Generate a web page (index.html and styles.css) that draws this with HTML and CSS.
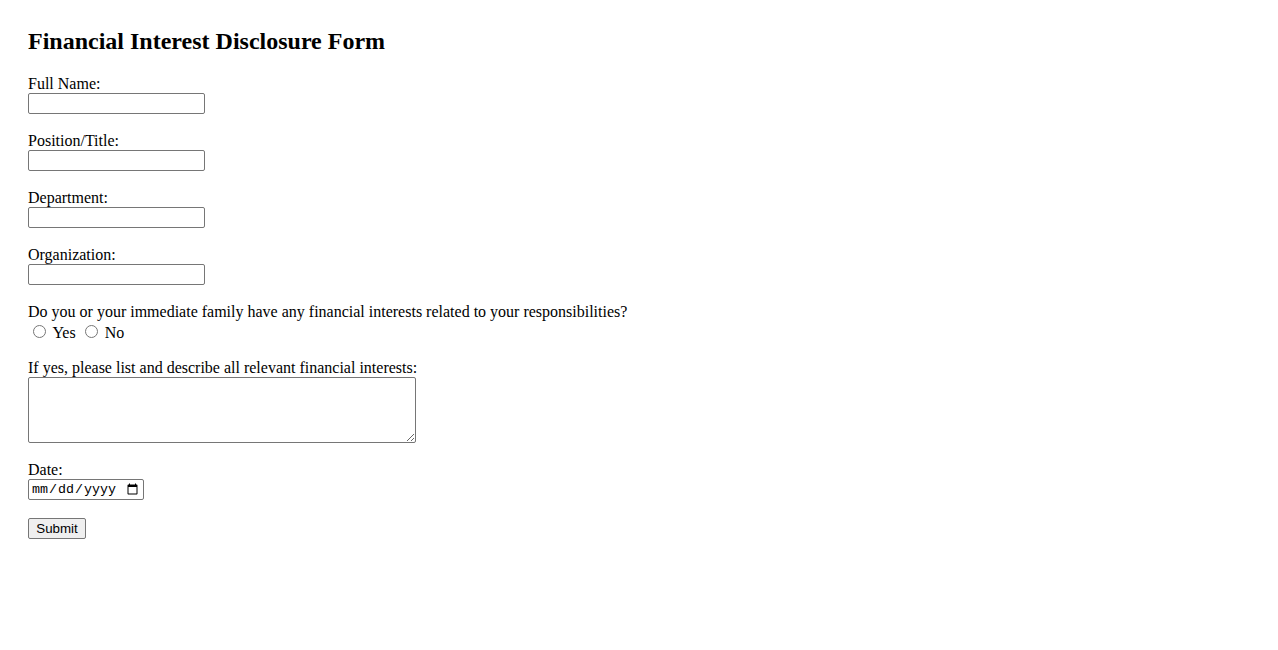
FILE: index.html
```html
<!DOCTYPE html>
<html lang="en">
<head>
<meta charset="utf-8">
<title>Financial Interest Disclosure Form</title>
<link rel="stylesheet" href="styles.css">
</head>
<body>
<form class="form">
  <h2 class="title">Financial Interest Disclosure Form</h2>
  <div class="group">
    <label class="label" for="name">Full Name:</label>
    <input class="text" type="text" id="name">
  </div>
  <div class="group">
    <label class="label" for="position">Position/Title:</label>
    <input class="text" type="text" id="position">
  </div>
  <div class="group">
    <label class="label" for="dept">Department:</label>
    <input class="text" type="text" id="dept">
  </div>
  <div class="group">
    <label class="label" for="org">Organization:</label>
    <input class="text" type="text" id="org">
  </div>
  <div class="group">
    <span class="label">Do you or your immediate family have any financial interests related to your responsibilities?</span>
    <div class="radios">
      <input class="radio" type="radio" name="fi" id="yes"> <label for="yes">Yes</label>
      <input class="radio" type="radio" name="fi" id="no"> <label for="no">No</label>
    </div>
  </div>
  <div class="group">
    <label class="label" for="desc">If yes, please list and describe all relevant financial interests:</label>
    <textarea class="area" id="desc"></textarea>
  </div>
  <div class="group">
    <label class="label" for="date">Date:</label>
    <input class="date" type="date" id="date">
  </div>
  <div class="group">
    <button class="submit" type="submit">Submit</button>
  </div>
</form>
</body>
</html>
```

FILE: styles.css
```css
html, body {
  background: #fff;
}
body {
  margin: 0;
  padding: 28px;
  font-family: "Liberation Serif", "Times New Roman", serif;
  font-size: 16px;
  color: #000;
}
.title {
  margin: 0 0 20px;
  font-size: 24px;
  font-weight: bold;
}
.group {
  margin-bottom: 18px;
}
.label {
  display: block;
  line-height: 18px;
}
.text {
  box-sizing: border-box;
  width: 177px;
  height: 21px;
  margin: 0;
  padding: 1px 2px;
  border: 1px solid #767676;
  border-radius: 2px;
  font-family: "Liberation Sans", Arial, sans-serif;
  font-size: 13.33px;
  display: block;
}
.radios {
  line-height: 20px;
  height: 20px;
}
.radios label {
  position: relative;
  top: 2px;
}
.radio {
  margin: 3px 3px 0 5px;
  width: 13px;
  height: 13px;
  vertical-align: -2px;
}
.area {
  box-sizing: border-box;
  display: block;
  width: 388px;
  height: 66px;
  margin: 0;
  border: 1px solid #767676;
  border-radius: 2px;
}
.date {
  box-sizing: border-box;
  display: block;
  width: 116px;
  height: 21px;
  margin: 0;
  padding: 1px 2px;
  border: 1px solid #767676;
  border-radius: 2px;
  font-family: "Liberation Mono", monospace;
  font-size: 13.33px;
}
.submit {
  box-sizing: border-box;
  width: 58px;
  height: 21px;
  padding: 1px 6px;
  margin: 0;
  font-family: "Liberation Sans", Arial, sans-serif;
  font-size: 13.33px;
  border: 1px solid #767676;
  border-radius: 2px;
  background: #efefef;
  color: #000;
}
```
